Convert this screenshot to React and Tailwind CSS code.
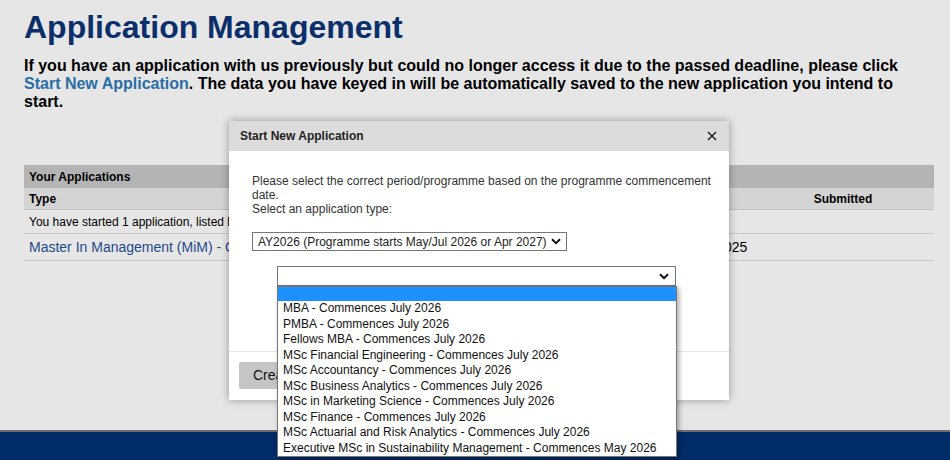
import React from "react";

const Chevron = ({ className = "" }) => (
  <svg viewBox="0 0 10 7" width="10" height="7" className={className}>
    <path d="M1 1.2 L5 5.2 L9 1.2" fill="none" stroke="#111" strokeWidth="2" />
  </svg>
);

const options = [
  "MBA - Commences July 2026",
  "PMBA - Commences July 2026",
  "Fellows MBA - Commences July 2026",
  "MSc Financial Engineering - Commences July 2026",
  "MSc Accountancy - Commences July 2026",
  "MSc Business Analytics - Commences July 2026",
  "MSc in Marketing Science - Commences July 2026",
  "MSc Finance - Commences July 2026",
  "MSc Actuarial and Risk Analytics - Commences July 2026",
  "Executive MSc in Sustainability Management - Commences May 2026",
];

export default function App() {
  return (
    <div
      className="relative h-[460px] w-[950px] overflow-hidden bg-[#e6e6e6] flex flex-col"
      style={{ fontFamily: '"Liberation Sans", Arial, sans-serif' }}
    >
      <div className="px-6 pt-[9px]">
        <h1 className="text-[32px] leading-[37px] font-bold text-[#0b2f6b]">
          Application Management
        </h1>
        <p className="mt-[11px] text-[16px] leading-[18px] font-bold text-black">
          If you have an application with us previously but could no longer access it due to the passed deadline, please click{" "}
          <span className="text-[#2a6ea6]">Start New Application</span>. The data you have keyed in will be automatically saved to the new application you intend to start.
        </p>

        <div className="mt-[54px] w-[910px] text-[12px] text-black">
          <div className="h-[23px] bg-[#b4b4b4] px-[5px] flex items-center font-bold">
            Your Applications
          </div>
          <div className="h-[22px] bg-[#d4d4d4] grid grid-cols-[1fr_84px_182px] items-center font-bold border-b border-[#c0c0c0]">
            <div className="px-[5px]">Type</div>
            <div className="px-[5px]">Modified</div>
            <div className="text-center">Submitted</div>
          </div>
          <div className="h-[24px] px-[5px] flex items-center border-b border-[#c8c8c8]">
            You have started 1 application, listed below.
          </div>
          <div className="h-[27px] grid grid-cols-[1fr_84px_182px] items-center border-b border-[#c8c8c8] text-[14px]">
            <div className="px-[5px] text-[#1d4a8a]">Master In Management (MiM) - Commences July 2026</div>
            <div className="whitespace-nowrap">20 Sep 2025</div>
            <div></div>
          </div>
        </div>
      </div>

      <div className="mt-auto h-[30px] border-t-2 border-[#6f6f6f] bg-[#002c69]"></div>

      {/* Modal */}
      <div className="absolute left-[229px] top-[121px] w-[500px] bg-white shadow-[0_0_8px_rgba(0,0,0,0.35)] text-[12px]">
        <div className="h-[30px] bg-[#dcdcdc] flex items-center justify-between pl-[11px] pr-[12px]">
          <span className="font-bold text-[#222]">Start New Application</span>
          <svg viewBox="0 0 10 10" width="10" height="10">
            <path d="M1 1 L9 9 M9 1 L1 9" stroke="#222" strokeWidth="1.5" />
          </svg>
        </div>
        <div className="h-[200px] pl-[23px] pt-[23px] text-[#333]">
          <div className="w-[462px] leading-[14px]">
            Please select the correct period/programme based on the programme commencement date.
            <br />
            Select an application type:
          </div>
          <div className="mt-[16px] w-[315px] h-[19px] border border-[#767676] flex items-center justify-between pl-[5px] pr-[5px] text-[12px] text-[#222]">
            <span>AY2026 (Programme starts May/Jul 2026 or Apr 2027)</span>
            <Chevron />
          </div>
          <div className="relative ml-[25px] mt-[15px] w-[399px] h-[20px] border border-[#767676] flex items-center justify-end pr-[6px]">
            <Chevron />
          </div>
        </div>
        <div className="border-t border-[#e5e5e5] px-[10px] pt-[10px] pb-[11px] flex">
          <div className="h-[27px] bg-[#c5c5c5] rounded-[2px] px-[14px] flex items-center text-[14px] text-[#111]">
            Create
          </div>
        </div>
      </div>

      {/* Open select list */}
      <div className="absolute left-[277px] top-[286px] w-[400px] bg-white border border-[#767676] shadow-[2px_2px_5px_rgba(0,0,0,0.35)] text-[12px] text-[#111]">
        <div className="h-[14px] bg-[#1e90ff]"></div>
        {options.map((o) => (
          <div key={o} className="h-[15.5px] leading-[15.5px] pl-[5px] whitespace-nowrap">
            {o}
          </div>
        ))}
      </div>
    </div>
  );
}
